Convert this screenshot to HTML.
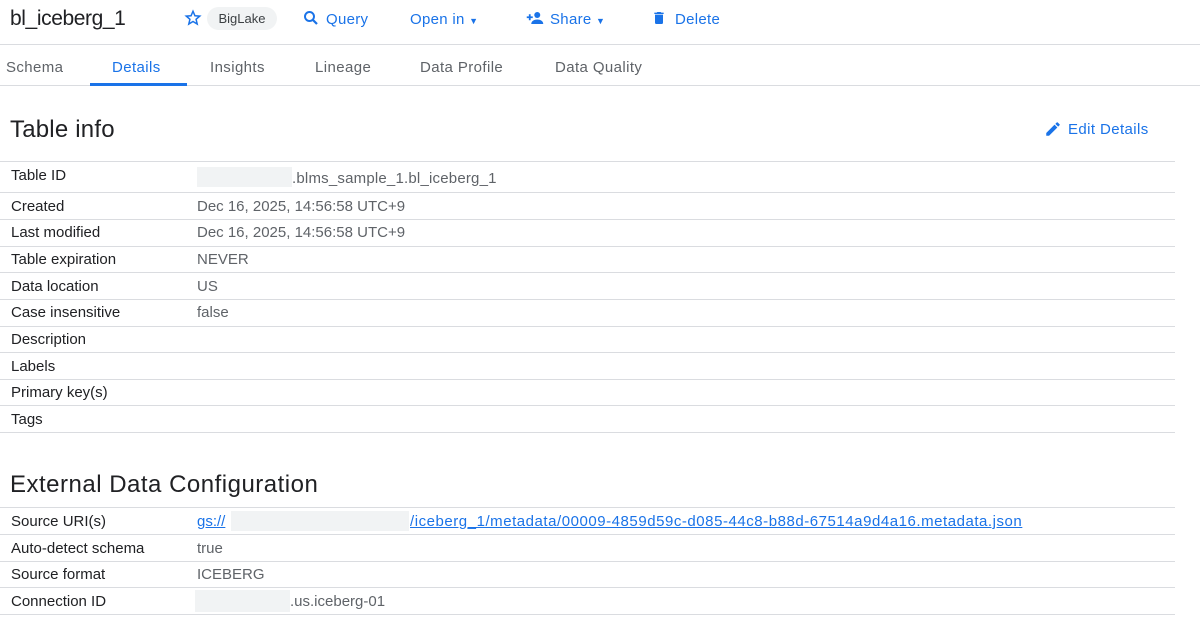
<!DOCTYPE html>
<html><head><meta charset="utf-8"><style>
*{margin:0;padding:0;box-sizing:border-box}
body{width:1200px;height:626px;background:#fff;font-family:"Liberation Sans",Arial,sans-serif;color:#202124;position:relative;overflow:hidden}
.a{position:absolute;white-space:nowrap}
.blue{color:#1a73e8}
.line{position:absolute;left:0;height:1px;background:#dadce0}
.k{position:absolute;left:11px;font-size:15px;color:#202124}
.v{position:absolute;left:197px;font-size:15px;color:#5f6368}
.blank{position:absolute;background:#f1f3f4}
.tab{position:absolute;top:59px;font-size:15px;color:#5f6368;letter-spacing:0.4px}
</style></head><body>
<div class="a" style="left:10px;top:7px;font-size:21px;letter-spacing:-0.4px">bl_iceberg_1</div>
<svg class="a" style="left:184px;top:9px" width="18" height="18" viewBox="0 0 24 24"><path d="M12 3l2.6 6 6.4.5-4.9 4.2 1.5 6.3L12 16.6 6.4 20l1.5-6.3L3 9.5 9.4 9z" fill="none" stroke="#1a73e8" stroke-width="2"/></svg>
<div class="a" style="left:207px;top:7px;width:70px;height:23px;border-radius:12px;background:#f1f3f4;font-size:13px;color:#3c4043;text-align:center;line-height:23px">BigLake</div>
<svg class="a" style="left:302px;top:9px" width="18" height="18" viewBox="0 0 24 24"><circle cx="10" cy="10" r="6" fill="none" stroke="#1a73e8" stroke-width="2.6"/><path d="M14.5 14.5L20 20" stroke="#1a73e8" stroke-width="3"/></svg>
<div class="a blue" style="left:326px;top:11px;font-size:15px;letter-spacing:0.3px">Query</div>
<div class="a blue" style="left:410px;top:11px;font-size:15px;letter-spacing:0.3px">Open in <span style="font-size:9px">▼</span></div>
<svg class="a" style="left:525px;top:9px" width="20" height="18" viewBox="0 0 24 24"><circle cx="15" cy="8" r="4" fill="#1a73e8"/><path d="M7 20c0-4 4-6 8-6s8 2 8 6z" fill="#1a73e8"/><path d="M5 7v8M1 11h8" stroke="#1a73e8" stroke-width="2.4"/></svg>
<div class="a blue" style="left:550px;top:11px;font-size:15px;letter-spacing:0.3px">Share <span style="font-size:9px">▼</span></div>
<svg class="a" style="left:651px;top:9px" width="16" height="18" viewBox="0 0 24 24"><path d="M6 19a2 2 0 002 2h8a2 2 0 002-2V7H6zM19 4h-3.5l-1-1h-5l-1 1H5v2h14z" fill="#1a73e8"/></svg>
<div class="a blue" style="left:675px;top:11px;font-size:15px;letter-spacing:0.3px">Delete</div>
<div class="line" style="top:44px;width:1200px"></div>
<div class="tab" style="left:6px">Schema</div>
<div class="tab blue" style="left:112px;color:#1a73e8">Details</div>
<div class="tab" style="left:210px">Insights</div>
<div class="tab" style="left:315px">Lineage</div>
<div class="tab" style="left:420px">Data Profile</div>
<div class="tab" style="left:555px">Data Quality</div>
<div class="line" style="top:85px;width:1200px"></div>
<div class="a" style="left:90px;top:83px;width:97px;height:3px;background:#1a73e8"></div>
<div class="a" style="left:10px;top:116px;font-size:24px;letter-spacing:0.2px">Table info</div>
<svg class="a" style="left:1044px;top:120px" width="18" height="18" viewBox="0 0 24 24"><path d="M3 17.25V21h3.75L17.8 9.94l-3.75-3.75zM20.7 7.04a1 1 0 000-1.41l-2.34-2.34a1 1 0 00-1.41 0l-1.83 1.83 3.75 3.75z" fill="#1a73e8"/></svg>
<div class="a blue" style="left:1068px;top:121px;font-size:15px;letter-spacing:0.4px">Edit Details</div>
<div class="line" style="top:161px;width:1175px"></div>
<div class="k" style="top:167px">Table ID</div><div class="blank" style="left:197px;top:167px;width:95px;height:20px"></div><div class="v" style="left:292px;top:170px;letter-spacing:0.2px">.blms_sample_1.bl_iceberg_1</div>
<div class="line" style="top:192px;width:1175px"></div>
<div class="k" style="top:198px">Created</div><div class="v" style="top:198px">Dec 16, 2025, 14:56:58 UTC+9</div>
<div class="line" style="top:219px;width:1175px"></div>
<div class="k" style="top:224px">Last modified</div><div class="v" style="top:224px">Dec 16, 2025, 14:56:58 UTC+9</div>
<div class="line" style="top:246px;width:1175px"></div>
<div class="k" style="top:251px">Table expiration</div><div class="v" style="top:251px">NEVER</div>
<div class="line" style="top:272px;width:1175px"></div>
<div class="k" style="top:278px">Data location</div><div class="v" style="top:278px">US</div>
<div class="line" style="top:299px;width:1175px"></div>
<div class="k" style="top:304px">Case insensitive</div><div class="v" style="top:304px">false</div>
<div class="line" style="top:326px;width:1175px"></div>
<div class="k" style="top:331px">Description</div>
<div class="line" style="top:352px;width:1175px"></div>
<div class="k" style="top:358px">Labels</div>
<div class="line" style="top:379px;width:1175px"></div>
<div class="k" style="top:384px">Primary key(s)</div>
<div class="line" style="top:405px;width:1175px"></div>
<div class="k" style="top:411px">Tags</div>
<div class="line" style="top:432px;width:1175px"></div>
<div class="a" style="left:10px;top:471px;font-size:24px;letter-spacing:0.5px">External Data Configuration</div>
<div class="line" style="top:507px;width:1175px"></div>
<div class="k" style="top:513px">Source URI(s)</div>
<div class="a blue" style="left:197px;top:513px;font-size:15px;text-decoration:underline">gs://</div>
<div class="blank" style="left:231px;top:511px;width:178px;height:20px"></div>
<div class="a blue" style="left:410px;top:513px;font-size:15px;text-decoration:underline;letter-spacing:0.54px">/iceberg_1/metadata/00009-4859d59c-d085-44c8-b88d-67514a9d4a16.metadata.json</div>
<div class="line" style="top:534px;width:1175px"></div>
<div class="k" style="top:540px">Auto-detect schema</div><div class="v" style="top:540px">true</div>
<div class="line" style="top:561px;width:1175px"></div>
<div class="k" style="top:566px">Source format</div><div class="v" style="top:566px">ICEBERG</div>
<div class="line" style="top:587px;width:1175px"></div>
<div class="k" style="top:593px">Connection ID</div><div class="blank" style="left:195px;top:590px;width:95px;height:22px"></div><div class="v" style="left:290px;top:593px">.us.iceberg-01</div>
<div class="line" style="top:614px;width:1175px"></div>
</body></html>
